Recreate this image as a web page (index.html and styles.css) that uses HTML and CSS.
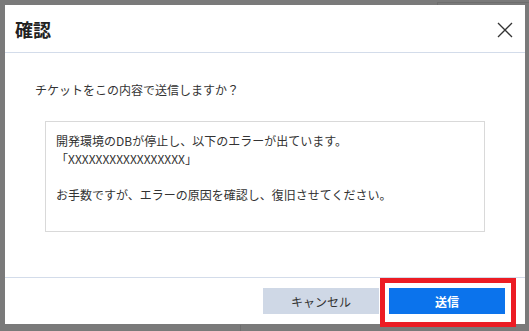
FILE: index.html
```html
<!DOCTYPE html>
<html lang="ja">
<head>
<meta charset="utf-8">
<link rel="stylesheet" href="styles.css">
</head>
<body>
<div class="bg-line bg-line-top"></div>
<div class="bg-line bg-line-v1"></div>
<div class="bg-line bg-line-v2"></div>
<div class="dialog">
  <div class="header">
    <div class="title">確認</div>
    <svg class="close" width="16" height="16" viewBox="0 0 16 16"><path d="M1 1L15 15M15 1L1 15" stroke="#333" stroke-width="1.3" fill="none"/></svg>
  </div>
  <div class="content">
    <p class="prompt">チケットをこの内容で送信しますか？</p>
    <div class="box">
      <div>開発環境のDBが停止し、以下のエラーが出ています。</div>
      <div>「XXXXXXXXXXXXXXXXX」</div>
      <div>&nbsp;</div>
      <div>お手数ですが、エラーの原因を確認し、復旧させてください。</div>
    </div>
  </div>
  <div class="footer">
    <button class="btn cancel">キャンセル</button>
    <button class="btn send">送信</button>
  </div>
</div>
<div class="highlight"></div>
</body>
</html>
```
FILE: styles.css
```css
* { box-sizing: border-box; }
html, body { margin: 0; }
body {
  width: 529px;
  height: 331px;
  background: #7a7a7a;
  padding: 5px;
  font-family: "Noto Sans CJK JP", "Noto Sans", sans-serif;
  position: relative;
  overflow: hidden;
}
.bg-line { position: absolute; background: #6e6e6e; }
.bg-line-top { left: 437px; top: 2px; width: 92px; height: 1px; }
.bg-line-v1 { left: 437px; top: 2px; width: 1px; height: 3px; }
.bg-line-v2 { left: 240px; top: 325px; width: 1px; height: 6px; }
.dialog {
  width: 520px;
  height: 319px;
  background: #fff;
  display: flex;
  flex-direction: column;
}
.header {
  height: 48px;
  border-bottom: 1px solid #d3dcea;
  display: flex;
  align-items: center;
  justify-content: space-between;
  padding: 0 12px 0 10px;
}
.title {
  font-size: 18px;
  font-weight: 700;
  color: #222;
  line-height: 20px;
}
.close { display: block; margin-top: 2px; }
.content {
  flex: 1;
  padding: 27px 0 0 0;
}
.prompt {
  margin: 0 0 21px 30px;
  font-size: 12px;
  line-height: 20px;
  color: #333;
}
.box {
  margin-left: 40px;
  width: 440px;
  height: 111px;
  border: 1px solid #d9d9d9;
  padding: 10px 10px;
  font-size: 12px;
  line-height: 18px;
  color: #333;
}
.footer {
  height: 47px;
  border-top: 1px solid #d3dcea;
  display: flex;
  justify-content: flex-end;
  align-items: flex-start;
  gap: 10px;
  padding: 10px 20px 0 0;
}
.btn {
  width: 116px;
  height: 26px;
  border: none;
  font-family: inherit;
  font-size: 12px;
  padding: 0;
}
.cancel { background: #cfd8e6; color: #333; }
.send { background: #0b73ec; color: #fff; font-weight: 700; }
.highlight {
  position: absolute;
  left: 380px;
  top: 278px;
  width: 136px;
  height: 49px;
  border: 5px solid #ec1c24;
}
```
